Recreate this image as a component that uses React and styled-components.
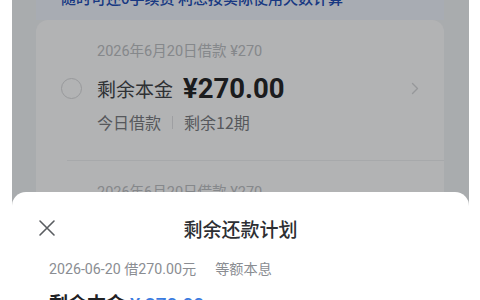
import React from "react";
import styled, { createGlobalStyle } from "styled-components";

const Global = createGlobalStyle`
  html, body { margin: 0; padding: 0; background: #ffffff; }
  body { font-family: "Noto Sans CJK SC", "Noto Sans", sans-serif; }
  * { box-sizing: border-box; }
`;

const Screen = styled.div`
  width: 480px;
  height: 300px;
  padding: 0 11px 0 12px;
  background: #ffffff;
`;

const Frame = styled.div`
  position: relative;
  height: 300px;
  overflow: hidden;
  background: #eff2f5;
`;

const Content = styled.div`
  display: flex;
  flex-direction: column;
  padding: 0 25px 0 24px;
`;

const Banner = styled.div`
  height: 20px;
  padding-left: 25px;
  background: #edf3fc;
  overflow: hidden;
`;

const BannerText = styled.div`
  margin-top: -12px;
  line-height: 20px;
  font-size: 15px;
  font-weight: 500;
  color: #2450b8;
  white-space: nowrap;
`;

const Card = styled.div`
  background: #fbfcfe;
  border-radius: 12px 12px 0 0;
  display: flex;
  flex-direction: column;
`;

const Item = styled.div`
  display: grid;
  grid-template-columns: 21px 1fr 12px;
  column-gap: 15px;
  padding: 22px 25px 27px 25px;
`;

const DateLine = styled.div`
  grid-column: 2;
  font-size: 14.5px;
  line-height: 20px;
  color: #bcc0c4;
  font-family: "Roboto", "Noto Sans CJK SC", sans-serif;
`;

const MainLine = styled.div`
  grid-column: 2;
  margin-top: 10px;
  display: flex;
  align-items: center;
  gap: 10px;
  height: 32px;
`;

const Radio = styled.span`
  grid-column: 1;
  grid-row: 2;
  align-self: center;
  margin-top: 10px;
  width: 21px;
  height: 21px;
  border-radius: 50%;
  border: 1.5px solid #d6d8db;
`;

const Label = styled.span`
  font-size: 19px;
  color: #43464a;
`;

const Amount = styled.span`
  font-family: "Roboto", "Noto Sans", sans-serif;
  font-size: 27.5px;
  font-weight: 700;
  color: #26282b;
`;

const Chevron = styled.span`
  grid-column: 3;
  grid-row: 2;
  align-self: center;
  justify-self: end;
  margin-top: 10px;
  display: flex;
  color: #d4d6d9;
`;

const SubLine = styled.div`
  grid-column: 2;
  margin-top: 7px;
  display: flex;
  align-items: center;
  gap: 11px;
  font-size: 16px;
  line-height: 22px;
  color: #7a7d82;
`;

const Sep = styled.span`
  width: 1px;
  height: 13px;
  background: #dfe1e4;
`;

const Divider = styled.div`
  height: 1px;
  margin-left: 31px;
  background: #eceef1;
`;

const Mask = styled.div`
  position: absolute;
  inset: 0;
  background: rgba(0, 0, 0, 0.29);
`;

const Sheet = styled.div`
  position: absolute;
  left: 0;
  right: 0;
  top: 192px;
  bottom: -40px;
  background: #ffffff;
  border-radius: 14px 14px 0 0;
  display: flex;
  flex-direction: column;
  padding: 22px 26px 0 26px;
`;

const SheetHeader = styled.div`
  display: grid;
  grid-template-columns: 40px 1fr 40px;
  align-items: center;
  height: 28px;
`;

const CloseBtn = styled.span`
  display: flex;
  color: #5a5d61;
`;

const Title = styled.div`
  text-align: center;
  font-size: 19px;
  font-weight: 500;
  color: #2d2f33;
`;

const InfoLine = styled.div`
  margin-top: 17px;
  padding-left: 11px;
  display: flex;
  gap: 19px;
  font-size: 14.2px;
  line-height: 20px;
  color: #8a8d92;
  font-family: "Roboto", "Noto Sans CJK SC", sans-serif;
`;

const RemainLine = styled.div`
  margin-top: 12px;
  padding-left: 11px;
  display: flex;
  align-items: baseline;
  gap: 5px;
  font-size: 19px;
  line-height: 24px;
`;

const RemainLabel = styled.span`
  font-weight: 600;
  color: #1f2124;
`;

const RemainAmount = styled.span`
  color: #3a7be0;
  font-family: "Roboto", "Noto Sans", sans-serif;
  font-weight: 500;
`;

function Loan({ date, remain }) {
  return (
    <Item>
      <DateLine>{date}</DateLine>
      <Radio />
      <MainLine>
        <Label>剩余本金</Label>
        <Amount>{remain}</Amount>
      </MainLine>
      <Chevron>
        <svg width="8" height="13" viewBox="0 0 8 13" fill="none">
          <path d="M1.5 1.5l5 5-5 5" stroke="currentColor" strokeWidth="1.4" strokeLinecap="round" strokeLinejoin="round" />
        </svg>
      </Chevron>
      <SubLine>
        <span>今日借款</span>
        <Sep />
        <span>剩余12期</span>
      </SubLine>
    </Item>
  );
}

export default function App() {
  return (
    <>
      <Global />
      <Screen>
        <Frame>
          <Content>
            <Banner>
              <BannerText>随时可还0手续费 利息按实际使用天数计算</BannerText>
            </Banner>
            <Card>
              <Loan date="2026年6月20日借款 ¥270" remain="¥270.00" />
              <Divider />
              <Loan date="2026年6月20日借款 ¥270" remain="¥270.00" />
            </Card>
          </Content>
          <Mask />
          <Sheet>
            <SheetHeader>
              <CloseBtn>
                <svg width="18" height="18" viewBox="0 0 18 18" fill="none">
                  <path d="M2 2l14 14M16 2L2 16" stroke="currentColor" strokeWidth="1.6" strokeLinecap="round" />
                </svg>
              </CloseBtn>
              <Title>剩余还款计划</Title>
              <span />
            </SheetHeader>
            <InfoLine>
              <span>2026-06-20 借270.00元</span>
              <span>等额本息</span>
            </InfoLine>
            <RemainLine>
              <RemainLabel>剩余本金</RemainLabel>
              <RemainAmount>¥ 270.00</RemainAmount>
            </RemainLine>
          </Sheet>
        </Frame>
      </Screen>
    </>
  );
}
